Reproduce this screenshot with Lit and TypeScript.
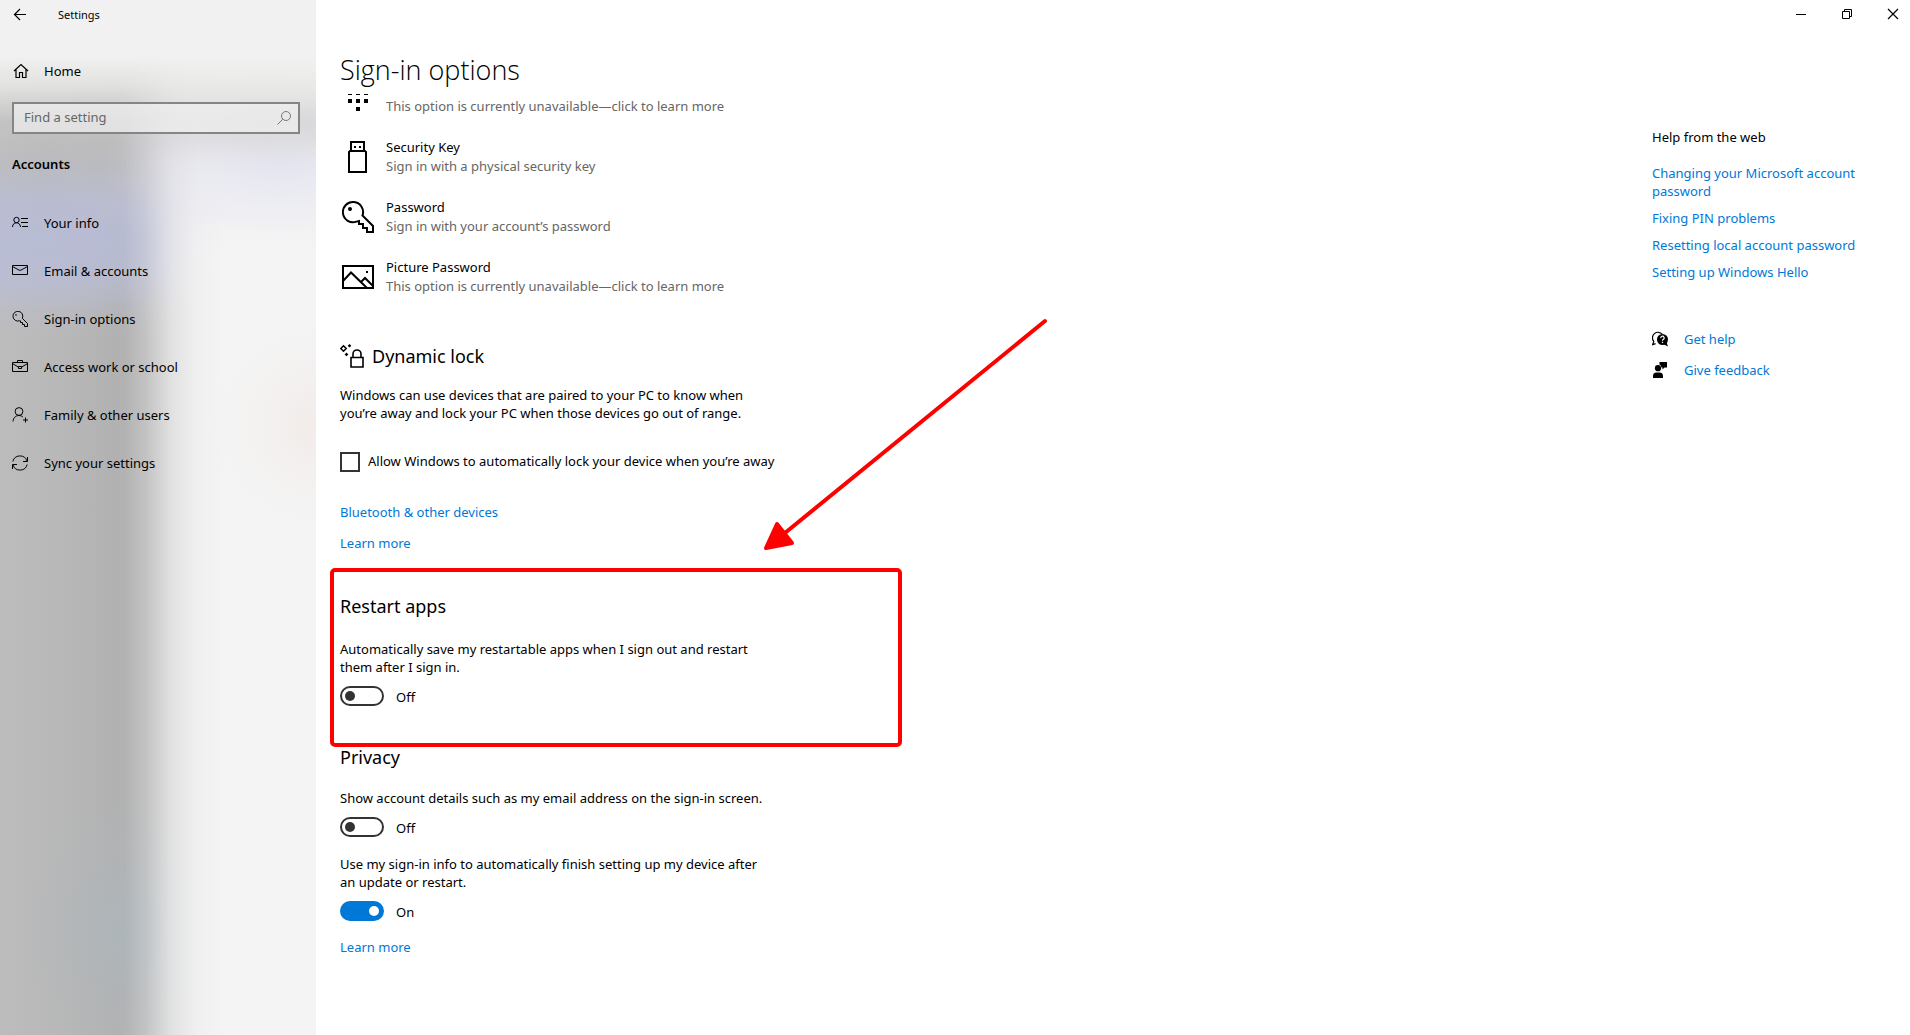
import { LitElement, html, css, svg, TemplateResult } from "lit";
import { customElement, property, state } from "lit/decorators.js";

const line = (body: unknown, size = 16) => html`<svg
  viewBox="0 0 ${size} ${size}" width=${size} height=${size}
  fill="none" stroke="currentColor" aria-hidden="true">${body}</svg>`;

const icons: Record<string, TemplateResult> = {
  back: line(svg`<path d="M14 7.5H2.5M8 2L2.5 7.5L8 13" stroke-width="1.2"/>`),
  home: line(svg`<path d="M1 8L8 1.5L15 8M3 6.5V14.5H6.5V9.5H9.5V14.5H13V6.5" stroke-width="1.2"/>`),
  search: line(svg`<circle cx="10" cy="6" r="4.5"/><path d="M6.8 9.2L1.5 14.5"/>`),
  info: line(svg`<circle cx="4.5" cy="5" r="2.7"/><path d="M.5 12C.6 9.3 2.2 7.8 4.5 7.8S8.3 9.3 8.5 12M9 3.5H16M9 7.5H16M10 11.5H16"/>`),
  mail: line(svg`<path d="M.5 2.5H15.5V11.5H.5ZM.5 3.5L7 7.1Q8 7.6 9 7.1L15.5 3.5"/>`),
  key: line(svg`<path d="M10.3 7.3L15.5 12.5V15.5H12.5V13.5H10.5V11.5H8.5V9.8L7.5 9.8A4.9 4.9 0 1 1 10.3 7.3Z"/><circle cx="4" cy="4" r=".8" fill="currentColor" stroke="none"/>`),
  work: line(svg`<path d="M.5 3.5H15.5V12.5H.5ZM5.5 3.5V1.5H10.5V3.5M.5 4.5L6.5 8.2M9.5 8.2L15.5 4.5M6.5 7.5H9.5V9.5H6.5Z"/>`),
  family: line(svg`<circle cx="7" cy="4.5" r="3.9"/><path d="M1 14.5C1.3 11 3.5 8.5 7 8.5C8.7 8.5 10 9.2 11 10.3M13.5 10.5V15.5M11 13H16"/>`),
  sync: line(svg`<path d="M.8 6.5A7.4 7.4 0 0 1 15 6M15.5 2V6.5H11M15.2 9.5A7.4 7.4 0 0 1 1 10M.5 14V9.5H5"/>`),
  pin: html`<svg viewBox="0 0 32 18" width="32" height="18" fill="currentColor" aria-hidden="true">
    <path d="M6 0h4v1H6zM14 0h4v1h-4zM22 0h4v1h-4zM6 5h4v4H6zM14 5h4v4h-4zM22 5h4v4h-4zM14 13h4v4h-4z"/></svg>`,
  usb: line(svg`<path d="M9 9V1H22V9M8 10H23L24 11V31H7V11Z" stroke-width="2"/><path d="M12 5h2v2h-2zM17 5h2v2h-2z" fill="currentColor" stroke="none"/>`, 32),
  bigKey: line(svg`<path d="M20.5 14.5L31 25V31H25V27H21V23H17V20L14.5 20.6A10.1 10.1 0 1 1 20.5 14.5Z" stroke-width="2"/><circle cx="8" cy="8" r="2" fill="currentColor" stroke="none"/>`, 32),
  picture: line(svg`<path d="M1 5H31V27H1ZM1 20L9 11.5L25 27M19 21L23 17L31 25" stroke-width="2"/><path d="M24 10h2v2h-2z" fill="currentColor" stroke="none"/>`, 32),
  lock: line(svg`<path d="M11 13.5H23V23H11ZM13 13.5V10A4 4 0 0 1 21 10V13.5" stroke-width="1.6"/><path d="M3.5 1.8L6.2 4.5L3.5 7.2L.8 4.5Z" stroke-width="1.5"/><path d="M9.5 0L11.3 1.8L9.5 3.6L7.7 1.8ZM6.5 8.6L8.3 10.4L6.5 12.2L4.7 10.4Z" fill="currentColor" stroke="none"/>`, 24),
  help: line(svg`<path d="M3.6 12.6L.6 13.6L1.8 10.4A5.2 5.2 0 1 1 10.2 3.2" stroke-width="1.2"/><circle cx="10.5" cy="8.5" r="5.5" fill="currentColor" stroke="none"/><path d="M12 13.5L16 15.5L14.5 11Z" fill="currentColor" stroke="none"/><path d="M8.8 7.2A1.7 1.7 0 1 1 11.4 8.3Q10.5 8.8 10.5 9.8M10.5 10.8V12" stroke="#fff" stroke-width="1.2"/>`),
  feedback: html`<svg viewBox="0 0 16 16" width="16" height="16" fill="currentColor" aria-hidden="true">
    <circle cx="6" cy="6.2" r="3.1"/><path d="M1 16V14Q1 10.5 4.5 10.5H7.5Q11 10.5 11 14V16ZM7.5 0H15V5.5H12.5L10.5 7.5V5.5H9.5Q9 3.2 7.5 2.6Z"/></svg>`,
  minimise: line(svg`<path d="M3 8.5H13"/>`),
  restore: line(svg`<path d="M3.5 5.5H10.5V12.5H3.5ZM5.5 5.5V3.5H12.5V10.5H10.5"/>`),
  close: line(svg`<path d="M3 3L13 13M13 3L3 13" stroke-width="1.2"/>`),
};

const base = css`
  * { box-sizing: border-box; }
  svg { display: block; flex: none; }
  a { color: #0078d7; text-decoration: none; }
  h1, h2, h3, p, ul { margin: 0; padding: 0; font-weight: 400; }
  ul { list-style: none; }
  button { border: 0; padding: 0; background: none; color: inherit; font: inherit; }
`;

@customElement("settings-nav")
class SettingsNav extends LitElement {
  static styles = [base, css`
    :host {
      display: block;
      background:
        linear-gradient(#f1f1f3 0, #f1f1f1 56px, rgba(234, 234, 232, .85) 84px, rgba(216, 216, 216, .25) 122px, transparent 165px),
        radial-gradient(ellipse 260px 64px at 270px 114px, rgba(206, 206, 208, .8), rgba(206, 206, 208, .45) 40%, rgba(206, 206, 208, .1) 75%, transparent),
        radial-gradient(ellipse 240px 90px at 280px 165px, rgba(226, 226, 240, .8), rgba(226, 226, 240, .45) 40%, rgba(226, 226, 240, .1) 75%, transparent),
        radial-gradient(ellipse 110px 110px at 316px 425px, rgba(241, 232, 229, .7), rgba(241, 232, 229, .25) 50%, transparent),
        linear-gradient(90deg, transparent 125px, rgba(244, 244, 244, .2) 145px, rgba(244, 244, 244, .7) 172px, rgba(244, 244, 244, .93) 196px, #f4f4f4 225px),
        radial-gradient(ellipse 340px 100px at 40px 240px, rgba(184, 188, 214, .95), rgba(186, 190, 216, .75) 40%, rgba(190, 193, 216, .2) 75%, transparent),
        radial-gradient(ellipse 110px 130px at 130px 930px, rgba(172, 182, 188, .8), rgba(174, 182, 188, .4) 45%, transparent),
        linear-gradient(90deg, #bcbcbc 0, #b7b7b7 70px, #b1b1b1 115px, #b6b6b6 150px);
    }
    .title { display: flex; align-items: center; gap: 30px; height: 30px; padding-left: 12px; font-size: 11px; }
    .title button { height: 26px; }
    .row { display: flex; align-items: center; gap: 16px; height: 48px; padding-left: 12px; color: #000; }
    .home { margin: 17px 0 7px; gap: 15px; padding-left: 13px; }
    .search {
      display: flex; align-items: center; height: 32px; margin: 0 16px 0 12px; padding-right: 6px;
      border: 2px solid #858585; background: rgba(240, 240, 240, .7); color: #777;
    }
    .search input {
      flex: 1; min-width: 0; border: 0; outline: 0; padding: 0 0 2px 10px; background: none;
      font: inherit; color: #000;
    }
    .search input::placeholder { color: #666; opacity: 1; }
    .section { margin: 20px 12px 25px; line-height: 20px; font-size: 13px; font-weight: 600; }
  `];

  items = [
    ["info", "Your info"], ["mail", "Email & accounts"], ["key", "Sign-in options"],
    ["work", "Access work or school"], ["family", "Family & other users"], ["sync", "Sync your settings"],
  ];

  render() {
    return html`
      <div class="title"><button aria-label="Back">${icons.back}</button><span>Settings</span></div>
      <a class="row home" href="#">${icons.home}<span>Home</span></a>
      <div class="search">
        <input type="text" placeholder="Find a setting" aria-label="Find a setting">
        ${icons.search}
      </div>
      <h2 class="section">Accounts</h2>
      <nav>${this.items.map(([icon, text]) => html`
        <a class="row" href="#">${icons[icon]}<span>${text}</span></a>`)}
      </nav>`;
  }
}

@customElement("toggle-switch")
class ToggleSwitch extends LitElement {
  @property() text = "";
  @property({ type: Boolean }) on = false;

  static styles = [base, css`
    :host { display: block; }
    .text { display: block; max-width: 432px; line-height: 18px; }
    .control { display: flex; align-items: center; gap: 12px; height: 20px; margin-top: 10px; }
    .state { padding-top: 2px; }
    input {
      appearance: none; display: flex; align-items: center; width: 44px; height: 20px; margin: 0; padding: 0 3px;
      border: 2px solid #333; border-radius: 10px; background: #fff;
    }
    input::before { content: ""; width: 10px; height: 10px; border-radius: 50%; background: #333; }
    input:checked { justify-content: flex-end; border-color: #0078d7; background: #0078d7; }
    input:checked::before { background: #fff; }
  `];

  render() {
    return html`
      <label class="text" for="switch">${this.text}</label>
      <div class="control">
        <input id="switch" type="checkbox" role="switch" .checked=${this.on}
          @change=${(e: Event) => (this.on = (e.target as HTMLInputElement).checked)}>
        <span class="state">${this.on ? "On" : "Off"}</span>
      </div>`;
  }
}

@customElement("app-root")
class AppRoot extends LitElement {
  @state() autoLock = false;

  static styles = [base, css`
    :host {
      display: grid; grid-template-columns: 316px 1fr; min-height: 100vh; background: #fff; color: #000;
      font-family: "Noto Sans", "Open Sans", sans-serif; font-size: 13px; line-height: 18px;
    }
    .page { display: flex; flex-direction: column; }
    .caption { display: flex; justify-content: flex-end; gap: 12px; height: 28px; }
    .caption button { display: grid; place-items: center; width: 34px; }
    .columns { display: flex; justify-content: space-between; padding-left: 24px; }
    .content { flex: 0 1 600px; }
    h1 { height: 66px; padding-top: 24px; line-height: 36px; font-family: "Open Sans", sans-serif; font-size: 27px; font-weight: 300; }
    h2 { display: flex; align-items: center; gap: 8px; line-height: 28px; font-size: 18px; }
    .option { display: flex; align-items: center; gap: 12px; height: 60px; line-height: 19px; }
    .option svg { margin-left: 2px; }
    .partial { align-items: flex-start; height: 33px; }
    .partial p { padding-top: 3px; }
    .muted { color: #666; }
    .lock { margin-top: 35px; }
    .lock p { max-width: 432px; margin-top: 16px; }
    .check { display: flex; align-items: center; gap: 8px; height: 20px; margin: 30px 0 31px; }
    .check input { appearance: none; width: 20px; height: 20px; margin: 0; border: 2px solid #333; }
    .check input:checked { background: #0078d7; }
    .check span { padding-bottom: 2px; }
    .link { display: block; width: max-content; }
    .lock .link + .link { margin-top: 13px; }
    .restart { position: relative; margin-top: 40px; }
    .restart toggle-switch { margin-top: 20px; }
    .frame { position: absolute; inset: -24px auto -41px -10px; width: 572px; border: 4px solid #f00; border-radius: 5px; pointer-events: none; }
    .arrow { position: absolute; left: 420px; top: -275px; pointer-events: none; }
    .privacy { margin-top: 37px; }
    .privacy toggle-switch { margin-top: 18px; }
    .privacy .link { margin-top: 17px; }
    .help { flex: 0 0 258px; padding: 100px 30px 0 0; }
    .help h3 { font-size: 13px; line-height: 18px; margin-bottom: 18px; }
    .help li { margin-bottom: 9px; }
    .support { margin-top: 49px; }
    .help .support li { margin-bottom: 13px; }
    .support a { display: flex; align-items: center; gap: 16px; }
    .support svg { color: #000; }
  `];

  render() {
    return html`
      <settings-nav></settings-nav>
      <div class="page">
        <div class="caption">
          <button aria-label="Minimise">${icons.minimise}</button>
          <button aria-label="Restore">${icons.restore}</button>
          <button aria-label="Close">${icons.close}</button>
        </div>
        <div class="columns">
          <main class="content">
            <h1>Sign-in options</h1>
            <ul>
              <li class="option partial">${icons.pin}<p class="muted">This option is currently unavailable—click to learn more</p></li>
              ${[
                ["usb", "Security Key", "Sign in with a physical security key"],
                ["bigKey", "Password", "Sign in with your account’s password"],
                ["picture", "Picture Password", "This option is currently unavailable—click to learn more"],
              ].map(([icon, name, note]) => html`
                <li class="option">${icons[icon]}<div><p>${name}</p><p class="muted">${note}</p></div></li>`)}
            </ul>
            <section class="lock">
              <h2>${icons.lock}<span>Dynamic lock</span></h2>
              <p>Windows can use devices that are paired to your PC to know when you’re away and lock your PC when those devices go out of range.</p>
              <label class="check">
                <input type="checkbox" .checked=${this.autoLock}
                  @change=${(e: Event) => (this.autoLock = (e.target as HTMLInputElement).checked)}>
                <span>Allow Windows to automatically lock your device when you’re away</span>
              </label>
              <a class="link" href="#">Bluetooth &amp; other devices</a>
              <a class="link" href="#">Learn more</a>
            </section>
            <section class="restart">
              <h2>Restart apps</h2>
              <toggle-switch text="Automatically save my restartable apps when I sign out and restart them after I sign in."></toggle-switch>
              <div class="frame"></div>
              <svg class="arrow" width="290" height="236" viewBox="0 0 290 236" aria-hidden="true">
                <path d="M285 4L20 220" stroke="#f00" stroke-width="4" stroke-linecap="round"/>
                <path d="M6 231L17 207L32 226Z" fill="#f00" stroke="#f00" stroke-width="4" stroke-linejoin="round"/>
              </svg>
            </section>
            <section class="privacy">
              <h2>Privacy</h2>
              <toggle-switch text="Show account details such as my email address on the sign-in screen."></toggle-switch>
              <toggle-switch on text="Use my sign-in info to automatically finish setting up my device after an update or restart."></toggle-switch>
              <a class="link" href="#">Learn more</a>
            </section>
          </main>
          <aside class="help">
            <h3>Help from the web</h3>
            <ul>
              ${["Changing your Microsoft account password", "Fixing PIN problems", "Resetting local account password", "Setting up Windows Hello"]
                .map((text) => html`<li><a href="#">${text}</a></li>`)}
            </ul>
            <ul class="support">
              <li><a href="#">${icons.help}<span>Get help</span></a></li>
              <li><a href="#">${icons.feedback}<span>Give feedback</span></a></li>
            </ul>
          </aside>
        </div>
      </div>`;
  }
}
